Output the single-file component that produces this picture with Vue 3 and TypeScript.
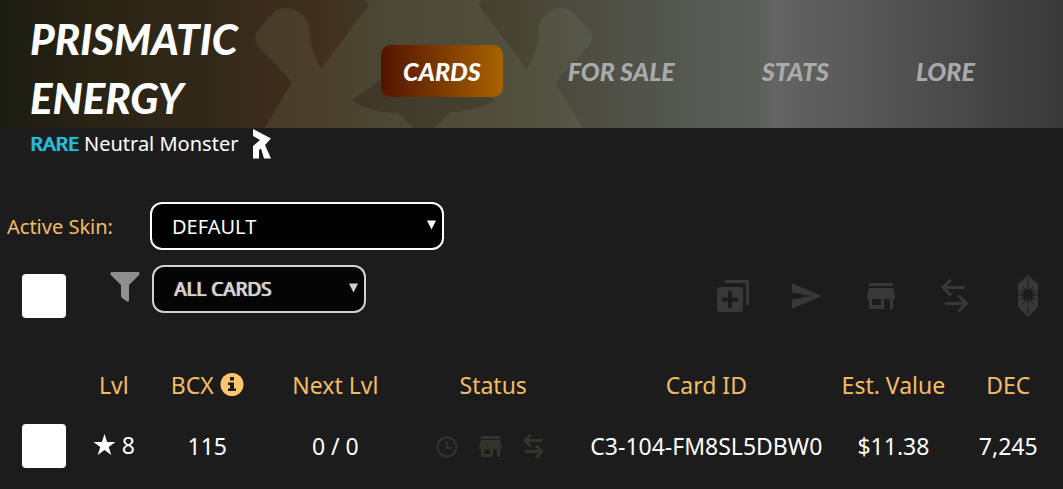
<script setup lang="ts">
import { ref } from 'vue'

interface Tab { label: string; href: string }
interface CardRow {
  id: string
  level: number
  bcx: number
  next: string
  value: string
  dec: string
}

const tabs: Tab[] = [
  { label: 'CARDS', href: '#cards' },
  { label: 'FOR SALE', href: '#for-sale' },
  { label: 'STATS', href: '#stats' },
  { label: 'LORE', href: '#lore' },
]
const activeTab = ref('CARDS')
const skin = ref('DEFAULT')
const filter = ref('ALL CARDS')
const allSelected = ref(false)
const selected = ref<string[]>([])

const rows: CardRow[] = [
  { id: 'C3-104-FM8SL5DBW0', level: 8, bcx: 115, next: '0 / 0', value: '$11.38', dec: '7,245' },
]
const rays = Array.from({ length: 12 }, (_, i) => i * 30)
</script>

<template>
  <div class="page">
    <header class="header">
      <svg class="emblem" width="338" height="128" viewBox="0 0 338 128" aria-hidden="true">
        <path
          fill-rule="evenodd"
          d="M109 0L114 5L66 69Q54 50 54 24Q45 8 30 8Q23 8 18 13L3 30Q-3 38 3 46L37 82L10 128H158L143 113Q112 112 97 100Q126 80 169 50Q212 80 240 100Q225 110 196 112L180 128H328L300 82L334 46Q340 38 334 30L319 13Q314 8 307 8Q292 8 284 24Q284 50 272 69L223 5L228 0Z"
        />
      </svg>
      <h1 class="title">PRISMATIC ENERGY</h1>
      <nav class="tabs">
        <a
          v-for="tab in tabs"
          :key="tab.label"
          :href="tab.href"
          class="tab"
          :class="{ active: tab.label === activeTab }"
          @click.prevent="activeTab = tab.label"
        >{{ tab.label }}</a>
      </nav>
    </header>

    <p class="meta">
      <span><span class="rarity">RARE</span> Neutral Monster</span>
      <svg width="20" height="32" viewBox="0 0 20 32" aria-hidden="true">
        <path fill="#fff" d="M1 1L19 10.500L13 17L19 30.500H12L9 20.500L7 22V30.500H1V18L8 12L1 8Z" />
      </svg>
    </p>

    <div class="skin">
      <label for="skin" class="skin-label">Active Skin:</label>
      <span class="select skin-select">
        <select id="skin" v-model="skin"><option>DEFAULT</option></select>
        <svg class="arrow" width="9" height="10" viewBox="0 0 10 10" aria-hidden="true"><path d="M0 0H10L5 10Z" /></svg>
      </span>
    </div>

    <div class="toolbar">
      <input v-model="allSelected" type="checkbox" class="check" aria-label="Select all cards" />
      <svg class="funnel" width="30" height="30" viewBox="0 0 30 30" aria-hidden="true">
        <path d="M1.500 0H28.500Q30.500 1 29 3L19 13V28.500Q18.500 30 17 29.500L12 26Q11 25 11 24V13L1 3Q-.5 1 1.500 0Z" />
      </svg>
      <span class="select filter-select">
        <select v-model="filter" aria-label="Filter cards"><option>ALL CARDS</option></select>
        <svg class="arrow" width="9" height="10" viewBox="0 0 10 10" aria-hidden="true"><path d="M0 0H10L5 10Z" /></svg>
      </span>
      <div class="actions">
        <button type="button" aria-label="Combine">
          <svg viewBox="0 0 32 42"><path fill-rule="evenodd" d="M8 5H32V30H29V8H8ZM3 12H23Q26 12 26 15V34Q26 37 23 37H3Q0 37 0 34V15Q0 12 3 12ZM11 16V22.500H5V26.500H11V33H15V26.500H21V22.500H15V16Z" /></svg>
        </button>
        <button type="button" aria-label="Send">
          <svg viewBox="0 0 32 42"><path d="M1 8L31 21L1 34V24.500L20 21L1 17.500Z" /></svg>
        </button>
        <button type="button" aria-label="Sell">
          <svg viewBox="0 0 32 42"><path fill-rule="evenodd" d="M4 8H28V11H4ZM4 13H28L30 21V24H28V34H25V24H19V34H4V24H2V21ZM7 24V30H16V24Z" /></svg>
        </button>
        <button type="button" aria-label="Rent">
          <svg viewBox="0 0 32 42"><g class="line"><path d="M26 12.500H5M12 4.500L4 12.500L12 20.500M6 28.500H27M19.500 20.500L27.500 28.500L19.500 36.500" /></g></svg>
        </button>
        <button type="button" aria-label="Convert to dark energy crystals">
          <svg viewBox="0 0 32 42">
            <path d="M15 0L25 9V32L15 42L5 32V9Z" />
            <g class="burst">
              <circle cx="15" cy="20" r="5" />
              <path v-for="angle in rays" :key="angle" d="M13.500 19L15 9L16.500 19Z" :transform="`rotate(${angle} 15 20)`" />
              <path d="M14.500 2H15.500V10H14.500ZM14.500 31H15.500V39H14.500Z" />
            </g>
          </svg>
        </button>
      </div>
    </div>

    <table class="cards">
      <colgroup>
        <col class="c-check" /><col class="c-lvl" /><col class="c-bcx" /><col class="c-next" />
        <col class="c-status" /><col class="c-id" /><col class="c-value" /><col class="c-dec" />
      </colgroup>
      <thead>
        <tr>
          <td></td>
          <th scope="col">Lvl</th>
          <th scope="col">
            <span class="pair">BCX
              <svg width="24" height="24" viewBox="0 0 24 24" aria-hidden="true">
                <circle cx="12" cy="11.500" r="11.500" fill="#fcc66c" />
                <path fill="#1c1c1c" d="M10 4H14V7.500H10ZM8 9.500H14V15.500H16V18H8V15.500H10V12H8Z" />
              </svg>
            </span>
          </th>
          <th scope="col">Next Lvl</th>
          <th scope="col">Status</th>
          <th scope="col">Card ID</th>
          <th scope="col">Est. Value</th>
          <th scope="col">DEC</th>
        </tr>
      </thead>
      <tbody>
        <tr v-for="row in rows" :key="row.id">
          <td class="check-cell">
            <input v-model="selected" :value="row.id" type="checkbox" class="check" :aria-label="`Select ${row.id}`" />
          </td>
          <td>
            <span class="pair">
              <svg width="23" height="22" viewBox="0 0 22 22" aria-hidden="true">
                <path fill="#fff" d="M11 0L13.600 8H22L15.200 13L17.800 21L11 16.100L4.200 21L6.800 13L0 8H8.400Z" />
              </svg>
              {{ row.level }}
            </span>
          </td>
          <td>{{ row.bcx }}</td>
          <td>{{ row.next }}</td>
          <td>
            <span class="status">
              <svg width="24" height="28" viewBox="0 0 24 28" aria-hidden="true">
                <g class="line thin"><circle cx="12" cy="15" r="9.500" /><path d="M11.500 9V16H17" /></g>
              </svg>
              <svg width="24" height="28" viewBox="0 0 24 28" aria-hidden="true">
                <path fill-rule="evenodd" d="M3 4H22V7H3ZM3 8H22L23.500 14V17H22V25H19V17H15V25H3V17H1V14ZM6 17.500V22H12V17.500Z" />
              </svg>
              <svg width="24" height="28" viewBox="0 0 24 28" aria-hidden="true">
                <g class="line"><path d="M21 8.500H5M10 2.500L4 8.500L10 14.500M4 19.500H20M15 13.500L21 19.500L15 25.500" /></g>
              </svg>
            </span>
          </td>
          <td>{{ row.id }}</td>
          <td>{{ row.value }}</td>
          <td>{{ row.dec }}</td>
        </tr>
      </tbody>
    </table>
  </div>
</template>

<style>
body {
  background: #1c1c1c;
}
</style>

<style scoped>
.page {
  color: #fff;
  font-family: "Noto Sans", "Open Sans", sans-serif;
  overflow-x: hidden;
}
.header {
  position: relative;
  display: flex;
  height: 128px;
  background: linear-gradient(90deg, #1b1c12 0%, #2a2414 9%, #32281a 20%, #3b2c1c 25%, #41301e 30%, #403a2a 37%, #44402f 44%, #484636 50%, #4f4f46 57%, #555a52 66%, #5a5e57 71%, #646464 73%, #5f5f5f 76%, #505050 86%, #393939 100%);
}
.emblem {
  position: absolute;
  left: 255px;
  top: 0;
  fill: rgba(130, 140, 115, .17);
}
.title {
  position: relative;
  box-sizing: border-box;
  width: 381px;
  flex: none;
  margin: 0;
  padding: 10px 100px 0 30px;
  font: italic 900 42px/59px Lato, sans-serif;
}
.tabs {
  position: relative;
  display: flex;
  align-items: center;
  gap: 43px;
  padding-top: 14px;
}
.tab {
  padding: 0 22px;
  border-radius: 10px;
  color: #aaa;
  font: italic 900 25px/52px Lato, sans-serif;
  text-decoration: none;
  white-space: nowrap;
}
.tab.active {
  color: #fff;
  background: linear-gradient(90deg, #521400, #a86200);
}
.meta {
  display: flex;
  align-items: center;
  gap: 14px;
  height: 32px;
  margin: 0;
  padding-left: 30px;
  font-size: 20px;
  line-height: 30px;
}
.rarity {
  color: #24bbdf;
  text-shadow: 0 0 1px currentColor, 1px 0 0 currentColor;
}
.skin {
  display: flex;
  align-items: center;
  margin-top: 42px;
}
.skin-label {
  width: 143px;
  padding-left: 7px;
  color: #f3bd62;
  font-size: 20px;
}
.select {
  position: relative;
  display: block;
}
.select select {
  appearance: none;
  box-sizing: border-box;
  width: 100%;
  height: 48px;
  padding: 0 20px;
  border: 2px solid #fff;
  border-radius: 12px;
  background: #000;
  color: #fff;
  font: 20px "Noto Sans", "Open Sans", sans-serif;
}
.arrow {
  position: absolute;
  right: 8px;
  top: 18px;
  fill: #fff;
  pointer-events: none;
}
.skin-select {
  width: 294px;
}
.filter-select {
  width: 214px;
  opacity: .8;
}
.filter-select select {
  font-size: 19px;
  text-shadow: 0 0 1px currentColor, 1px 0 0 currentColor;
}
.toolbar {
  display: flex;
  align-items: flex-start;
  margin-top: 15px;
  padding: 0 18px 0 22px;
}
.check {
  appearance: none;
  display: block;
  width: 44px;
  height: 44px;
  margin: 0;
  border-radius: 4px;
  background: #fff;
}
.toolbar .check {
  margin-top: 9px;
}
.funnel {
  margin: 7px 12px 0 44px;
  fill: #8f8f8f;
}
.actions {
  display: flex;
  justify-content: flex-end;
  gap: 42px;
  margin: 10px 0 0 auto;
}
.actions button {
  width: 32px;
  height: 42px;
  padding: 0;
  border: 0;
  background: none;
  color: #383838;
}
.actions svg {
  display: block;
  width: 32px;
  height: 42px;
  fill: currentColor;
}
.line {
  fill: none;
  stroke: currentColor;
  stroke-width: 3;
}
.thin {
  stroke-width: 2;
}
.burst {
  fill: #1c1c1c;
}
.cards {
  width: 100%;
  margin-top: 36px;
  border-collapse: collapse;
  table-layout: fixed;
  font-size: 23px;
  line-height: 32px;
  text-align: center;
  white-space: nowrap;
}
.c-check { width: 7.2%; }
.c-lvl { width: 7%; }
.c-bcx { width: 10.6%; }
.c-next { width: 13.5%; }
.c-status { width: 16.2%; }
.c-id { width: 23.9%; }
.c-value { width: 11.3%; }
.c-dec { width: 10.3%; }
.cards th,
.cards td {
  padding: 0;
  font-weight: 400;
}
.cards th {
  height: 62px;
  color: #f3bd62;
}
.cards tbody td {
  height: 60px;
}
.cards .check-cell {
  padding-left: 22px;
}
.pair {
  display: inline-flex;
  align-items: center;
  gap: 6px;
}
.status {
  display: flex;
  justify-content: center;
  gap: 19px;
  padding-right: 6px;
  color: #33342c;
}
.status svg {
  fill: currentColor;
}
</style>
